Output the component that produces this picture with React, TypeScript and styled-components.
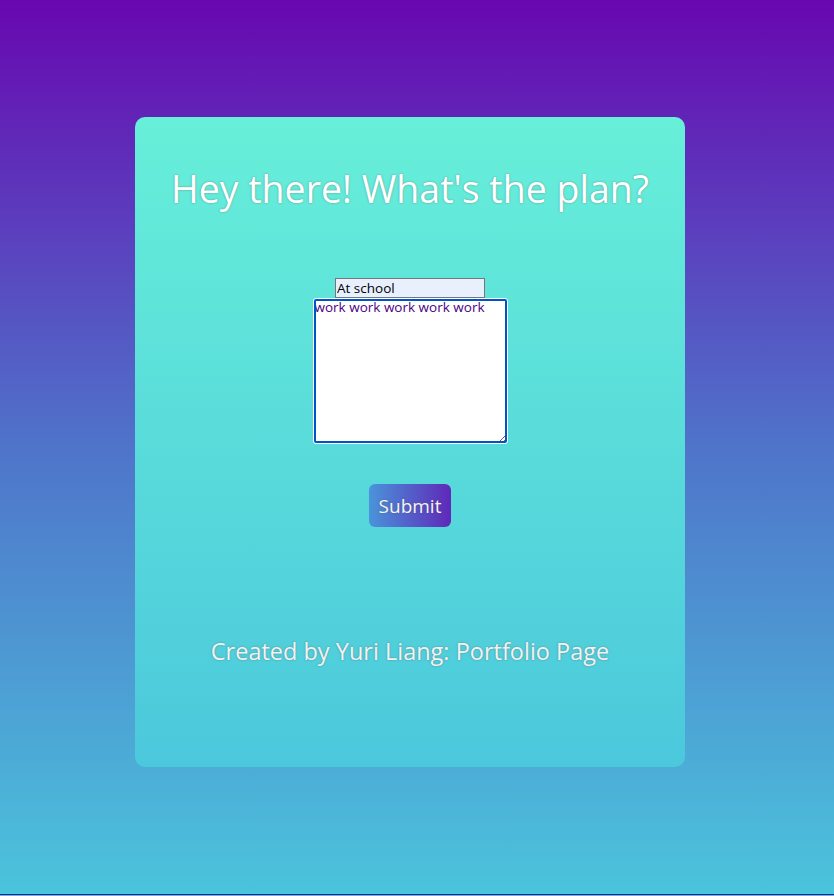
import React from "react";
import styled, { createGlobalStyle } from "styled-components";

const Global = createGlobalStyle`
  html, body { margin: 0; padding: 0; }
  body {
    background: #4bc4dc;
    font-family: "Open Sans", "Trebuchet MS", sans-serif;
  }
`;

const Page = styled.div`
  height: 895px;
  border-bottom: 1px solid #3a1a8a;
  background: linear-gradient(to bottom, #6807b0 0%, #4f74ca 50%, #4bc4dc 100%);
  display: flex;
  justify-content: center;
  padding: 117px 14px 0 0;
  box-sizing: border-box;
`;

const Card = styled.main`
  width: 550px;
  height: 650px;
  border-radius: 10px;
  background: linear-gradient(to bottom, #67efd9 0%, #4bc8dc 100%);
  display: flex;
  flex-direction: column;
  align-items: center;
  box-sizing: border-box;
  padding-top: 50px;
`;

const Title = styled.h1`
  margin: 0;
  font-size: 37.5px;
  font-weight: normal;
  color: #ffffff;
  text-shadow: 0 0 2px rgba(90, 90, 90, 0.6);
  line-height: 44px;
`;

const Form = styled.form`
  margin-top: 67px;
  display: flex;
  flex-direction: column;
  align-items: center;
`;

const TitleInput = styled.input`
  width: 150px;
  height: 20px;
  box-sizing: border-box;
  border: 1px solid #767676;
  background: #e8f0fe;
  font-family: inherit;
  font-size: 13.5px;
  font-weight: 500;
  color: #000;
  padding: 0 1px;
  margin: 0;
`;

const Body = styled.textarea`
  width: 195px;
  height: 146px;
  box-sizing: border-box;
  margin: 0;
  border: 1px solid #ffffff;
  border-radius: 3px;
  outline: 2px solid #0054c8;
  outline-offset: -3px;
  font-family: inherit;
  font-size: 13.5px;
  font-weight: 500;
  line-height: 17px;
  color: #4b0082;
  padding: 0 1px;
  resize: both;
`;

const Submit = styled.button`
  margin-top: 40px;
  width: 82px;
  height: 43px;
  border: none;
  border-radius: 6px;
  background: linear-gradient(to right, #4a94da, #5f28b9);
  color: #f4f4f4;
  font-family: inherit;
  font-size: 19px;
  text-shadow: 0 0 2px rgba(80, 80, 80, 0.5);
  cursor: pointer;
`;

const Footer = styled.p`
  margin: 108px 0 0;
  font-size: 23.5px;
  line-height: 32px;
  color: #f2f2f2;
  text-shadow: 0 0 2px rgba(90, 90, 90, 0.6);
`;

export default function App() {
  return (
    <>
      <Global />
      <Page>
        <Card>
          <Title>Hey there! What's the plan?</Title>
          <Form onSubmit={(e) => e.preventDefault()}>
            <TitleInput defaultValue="At school" />
            <Body defaultValue="work work work work work" />
            <Submit type="submit">Submit</Submit>
          </Form>
          <Footer>Created by Yuri Liang: Portfolio Page</Footer>
        </Card>
      </Page>
    </>
  );
}
